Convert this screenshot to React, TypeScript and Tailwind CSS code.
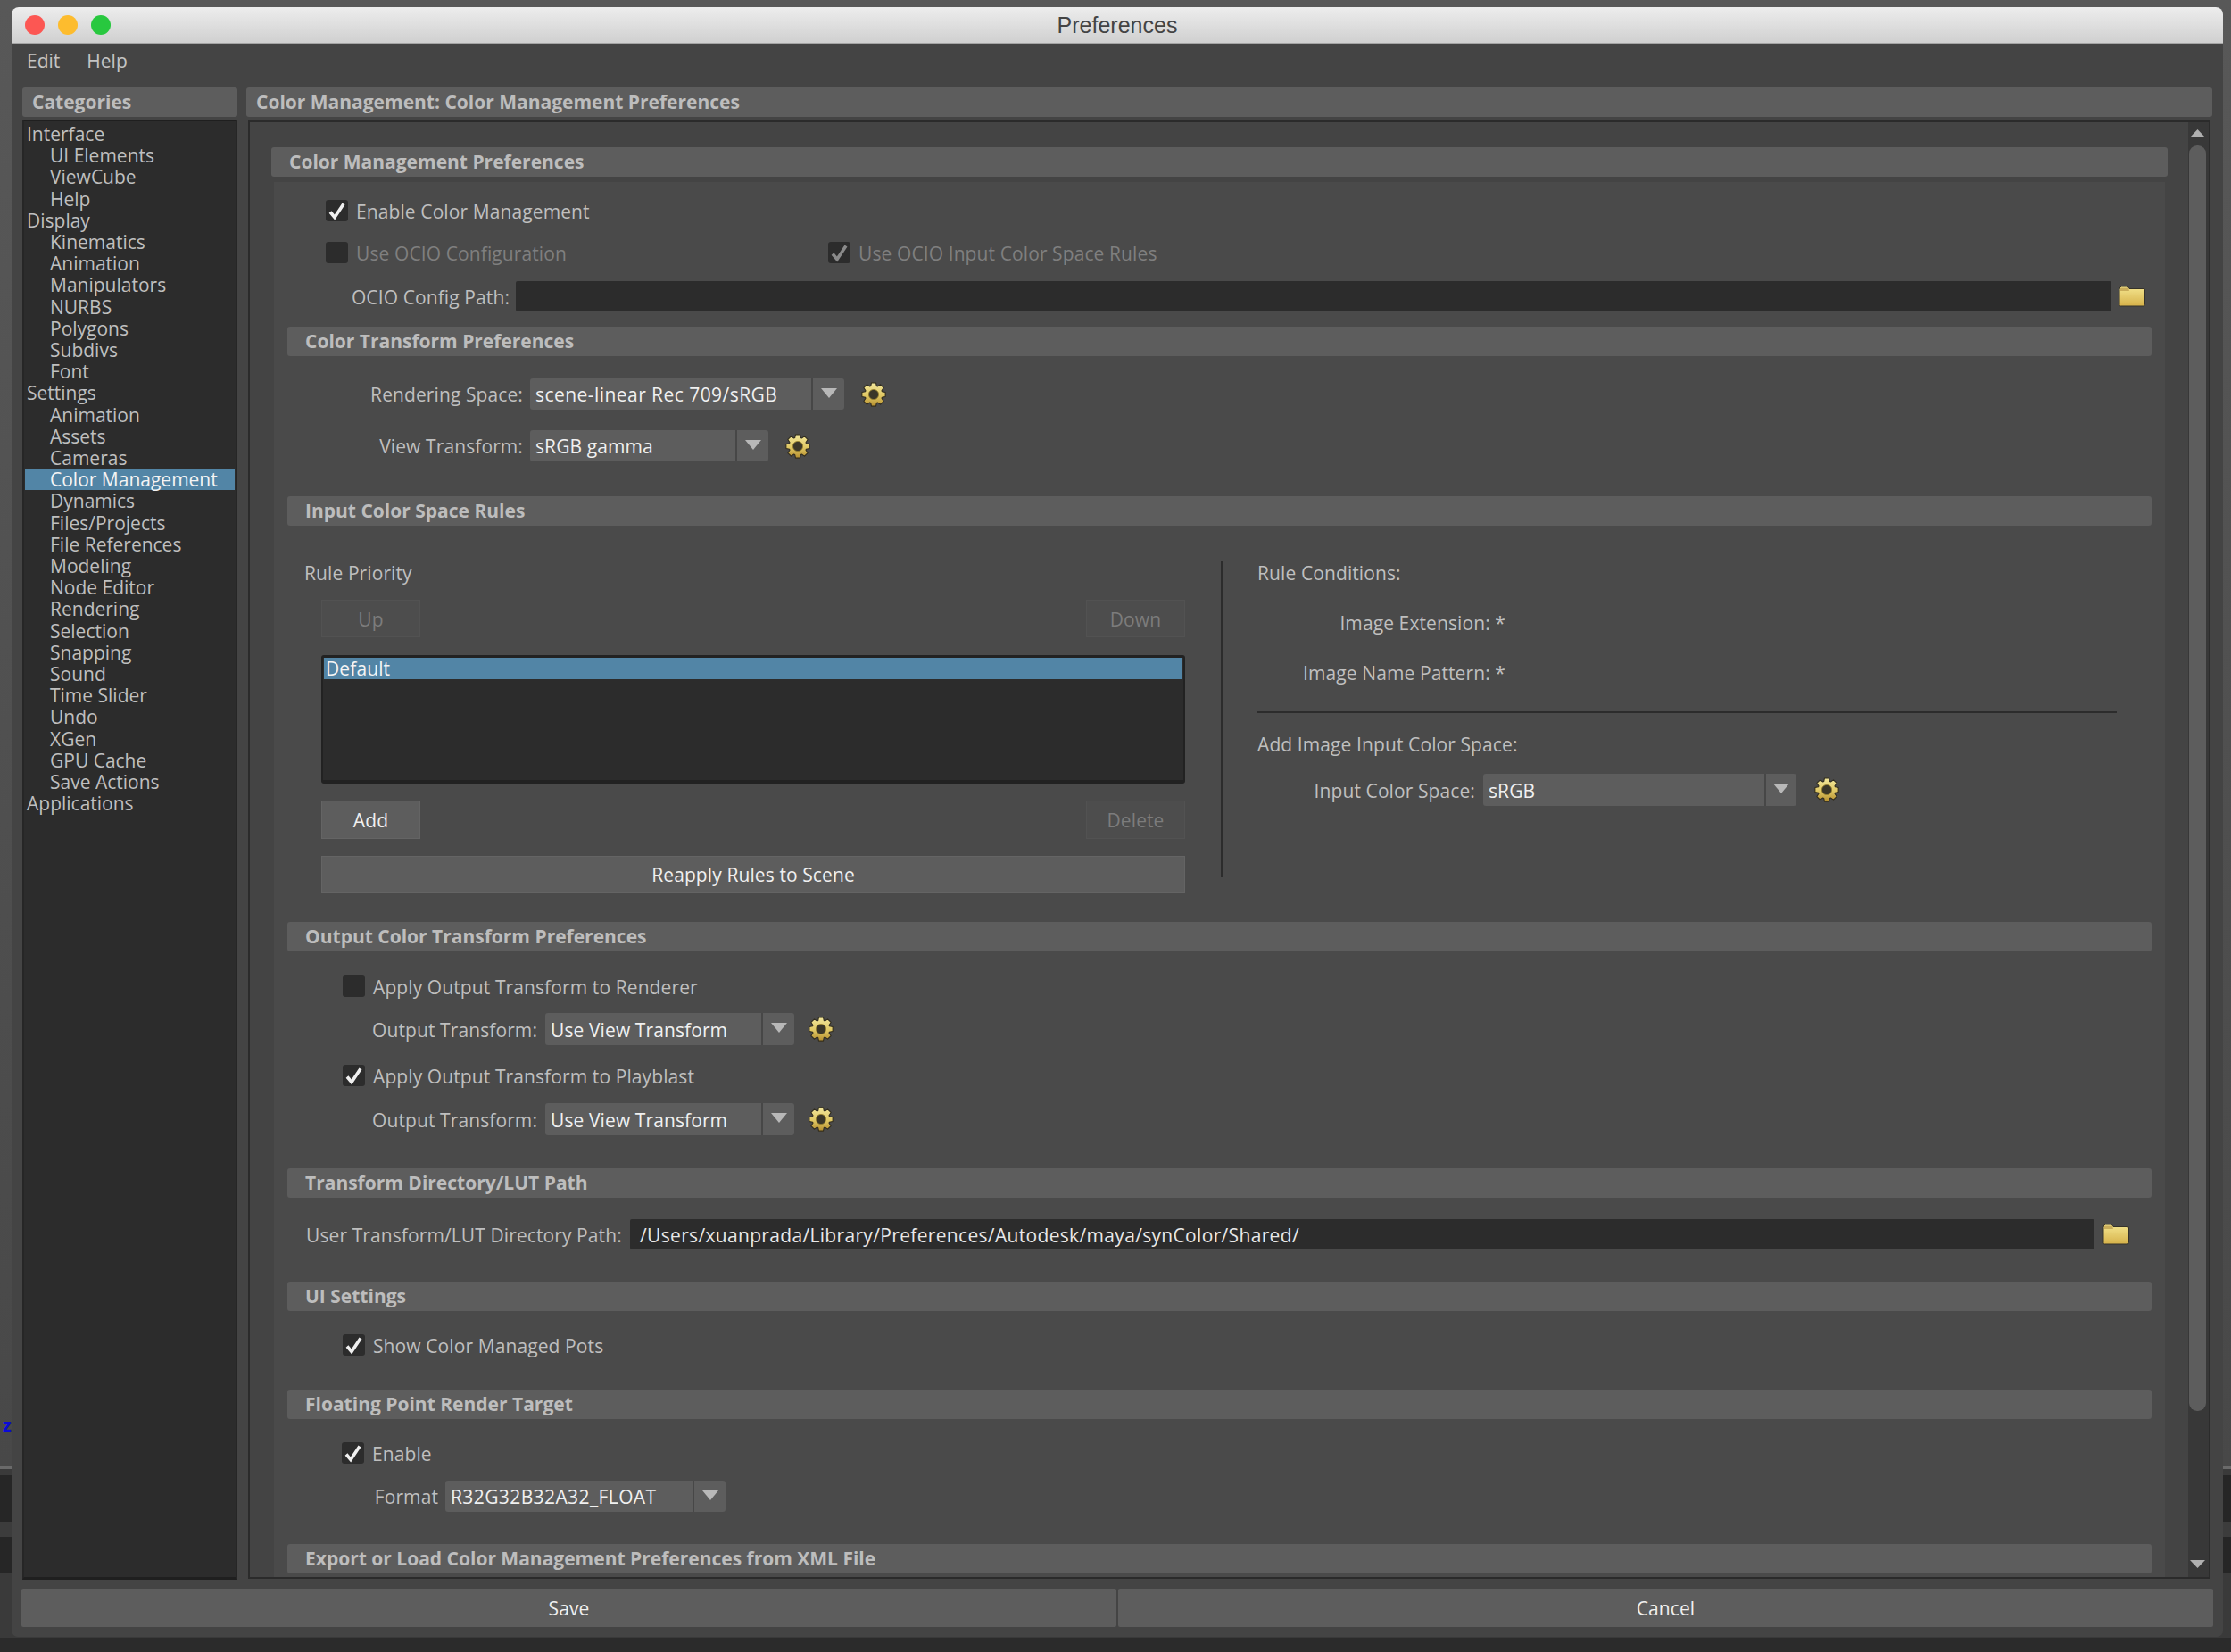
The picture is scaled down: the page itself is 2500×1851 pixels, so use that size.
const categories: [string, boolean][] = [
  ["Interface", false],
  ["UI Elements", true],
  ["ViewCube", true],
  ["Help", true],
  ["Display", false],
  ["Kinematics", true],
  ["Animation", true],
  ["Manipulators", true],
  ["NURBS", true],
  ["Polygons", true],
  ["Subdivs", true],
  ["Font", true],
  ["Settings", false],
  ["Animation", true],
  ["Assets", true],
  ["Cameras", true],
  ["Color Management", true],
  ["Dynamics", true],
  ["Files/Projects", true],
  ["File References", true],
  ["Modeling", true],
  ["Node Editor", true],
  ["Rendering", true],
  ["Selection", true],
  ["Snapping", true],
  ["Sound", true],
  ["Time Slider", true],
  ["Undo", true],
  ["XGen", true],
  ["GPU Cache", true],
  ["Save Actions", true],
  ["Applications", false],
];

// 8 tooth gear outline, centred on 14,14
const gearPath = () => {
  const pts: string[] = [];
  for (let i = 0; i < 8; i++) {
    const a = (i * Math.PI) / 4 - Math.PI / 2;
    const steps: [number, number][] = [
      [10, -0.34],
      [13.4, -0.19],
      [13.4, 0.19],
      [10, 0.34],
    ];
    for (const [r, d] of steps) {
      pts.push(`${(14 + r * Math.cos(a + d)).toFixed(2)},${(14 + r * Math.sin(a + d)).toFixed(2)}`);
    }
  }
  return "M" + pts.join("L") + "Z";
};

function Gear({ className }: { className: string }) {
  return (
    <svg viewBox="0 0 28 28" className={`h-[28px] w-[28px] shrink-0 ${className}`}>
      <defs>
        <linearGradient id="gear-fill" x1="0" y1="0" x2="0" y2="1">
          <stop offset="0" stopColor="#f2e79c" />
          <stop offset="0.55" stopColor="#e0c864" />
          <stop offset="1" stopColor="#b58e2e" />
        </linearGradient>
      </defs>
      <path d={gearPath()} fill="url(#gear-fill)" stroke="#2f2b1e" strokeWidth="1.1" strokeLinejoin="round" />
      <circle cx="14" cy="14" r="5.6" fill="#3a3628" stroke="#96802f" strokeWidth="0.8" />
    </svg>
  );
}

function Folder({ className }: { className: string }) {
  return (
    <svg viewBox="0 0 30 24" className={`h-[24px] w-[30px] shrink-0 ${className}`}>
      <defs>
        <linearGradient id="folder-fill" x1="0" y1="0" x2="0" y2="1">
          <stop offset="0" stopColor="#f4e58f" />
          <stop offset="1" stopColor="#d6b24a" />
        </linearGradient>
      </defs>
      <path
        d="M1 4.5 Q1 1 3.5 1 L9 1 Q11 1 12 3.5 L28 3.5 Q29.5 3.5 29.5 5 L29.5 21.5 Q29.5 23 28 23 L2.5 23 Q1 23 1 21.5 Z"
        fill="url(#folder-fill)"
        stroke="#35322a"
        strokeWidth="1"
      />
      <path d="M2 2.5 L11 2.5 L12 6 L2 6 Z" fill="#c9ad5a" />
    </svg>
  );
}

function Checkbox({ checked, dim }: { checked?: boolean; dim?: boolean }) {
  return (
    <div className="flex h-[24px] w-[25px] shrink-0 items-center justify-center rounded-[3px] bg-[#2c2c2c]">
      {checked && (
        <svg viewBox="0 0 25 24" className="h-[24px] w-[25px]">
          <path
            d="M5 13.5 L10 19.5 L20 4.5"
            fill="none"
            stroke={dim ? "#8a8a8a" : "#f0f0f0"}
            strokeWidth="3.6"
          />
        </svg>
      )}
    </div>
  );
}

function Bar({ label, className }: { label: string; className?: string }) {
  return (
    <div
      className={`flex h-[33px] shrink-0 items-center rounded-[3px] bg-[#5d5d5d] pl-[20px] text-[21px] font-bold tracking-normal text-[#bdbdbd] ${className ?? ""}`}
    >
      {label}
    </div>
  );
}

function Combo({
  value,
  width,
  arrow = 37,
  height = "h-[35px]",
  textClass = "",
}: {
  value: string;
  width: string;
  arrow?: number;
  height?: string;
  textClass?: string;
}) {
  return (
    <div className={`flex shrink-0 rounded-[3px] bg-[#5d5d5d] ${width} ${height}`}>
      <div className={`flex flex-1 items-center pl-[6px] pt-[3px] text-[#f0f0f0] ${textClass}`}>{value}</div>
      <div
        className="flex shrink-0 items-center justify-center border-l-2 border-[#474747]"
        style={{ width: arrow }}
      >
        <svg viewBox="0 0 18 11" className="-mt-[3px] h-[11px] w-[18px]">
          <polygon points="0,0 18,0 9,11" fill="#b8b8b8" />
        </svg>
      </div>
    </div>
  );
}

function DisabledButton({ label, className }: { label: string; className?: string }) {
  return (
    <div
      className={`flex items-center justify-center border border-[#525252] bg-[#4d4d4d] pt-[3px] text-[#7c7c7c] ${className ?? ""}`}
    >
      {label}
    </div>
  );
}

function CheckRow({
  label,
  checked,
  className,
}: {
  label: string;
  checked?: boolean;
  className: string;
}) {
  return (
    <div className={`flex h-[24px] items-center gap-[9px] ${className}`}>
      <Checkbox checked={checked} />
      <span className="pt-[3px]">{label}</span>
    </div>
  );
}

function OutputRow({ className }: { className: string }) {
  return (
    <div className={`flex h-[36px] items-center ${className}`}>
      <div className="w-[295px] pt-[3px] text-right">Output Transform:</div>
      <div className="w-[9px]" />
      <Combo value="Use View Transform" width="w-[279px]" height="h-[36px]" />
      <Gear className="ml-[16px]" />
    </div>
  );
}

function Backdrop() {
  return (
    <div className="flex h-full flex-col">
      <div className="h-[1643px] bg-gradient-to-b from-[#585858] to-[#484848]" />
      <div className="h-[3px] bg-[#6a6a6a]" />
      <div className="h-[7px] bg-[#3a3a3a]" />
      <div className="h-[52px] bg-[#262626]" />
      <div className="h-[17px] bg-[#3c3c3c]" />
      <div className="h-[40px] bg-[#262626]" />
      <div className="h-[73px] bg-[#3a3a3a]" />
      <div className="flex-1 bg-[#2b2b2b]" />
    </div>
  );
}

export default function App() {
  return (
    <div className="relative h-[1851px] w-[2500px] overflow-hidden font-['Open_Sans',sans-serif] text-[21px] tracking-[0.1px] text-[#bfbfbf]">
      <Backdrop />
      <span className="absolute left-[3px] top-[1582px] text-[20px] font-bold text-[#0a0ad8]">z</span>

      <div className="absolute left-[13px] top-[8px] flex h-[1826px] w-[2478px] flex-col rounded-t-[8px] rounded-b-[7px] bg-[#444444]">
        {/* title bar */}
        <div className="grid h-[41px] shrink-0 grid-cols-[1fr_auto_1fr] items-center rounded-t-[8px] border-b border-[#a4a4a4] bg-gradient-to-b from-[#ededed] to-[#d0d0d0]">
          <div className="flex gap-[15px] pl-[15px]">
            <div className="h-[22px] w-[22px] rounded-full bg-[#fc5753]" />
            <div className="h-[22px] w-[22px] rounded-full bg-[#fdbc2e]" />
            <div className="h-[22px] w-[22px] rounded-full bg-[#28c83f]" />
          </div>
          <div className="pt-[2px] font-['Liberation_Sans',sans-serif] text-[25px] tracking-normal text-[#444444]">
            Preferences
          </div>
          <div />
        </div>

        {/* menu bar */}
        <div className="flex h-[49px] shrink-0 items-start gap-[30px] pl-[17px] pt-[4px] text-[21px] tracking-normal text-[#c4c4c4]">
          <span>Edit</span>
          <span>Help</span>
        </div>

        <div className="flex min-h-0 flex-1 gap-[10px] px-[12px]">
          {/* categories */}
          <div className="flex w-[241px] shrink-0 flex-col">
            <div className="flex h-[33px] shrink-0 items-center rounded-[3px] bg-[#5d5d5d] pl-[11px] text-[21px] font-bold tracking-normal text-[#bdbdbd]">
              Categories
            </div>
            <div className="mt-[3px] h-[1636px] border-x-2 border-t-2 border-b-[3px] border-x-[#262626] border-t-[#1f1f1f] border-b-[#1f1f1f] bg-[#2c2c2c] pt-[2px] leading-[24.2px] tracking-normal">
              {categories.map(([name, sub], i) =>
                name === "Color Management" ? (
                  <div key={i} className="mx-px bg-[#5285a6] pl-[28px] text-[#f4f4f4]">
                    {name}
                  </div>
                ) : (
                  <div key={i} className={sub ? "pl-[29px]" : "pl-[3px]"}>
                    {name}
                  </div>
                ),
              )}
            </div>
          </div>

          {/* page */}
          <div className="flex min-w-0 flex-1 flex-col">
            <div className="flex h-[33px] shrink-0 items-center rounded-[3px] bg-[#5d5d5d] pl-[11px] text-[21px] font-bold tracking-normal text-[#bdbdbd]">
              Color Management: Color Management Preferences
            </div>
            <div className="mx-[2px] mt-[4px] flex h-[1634px] border-2 border-[#2b2b2b]">
              <div className="flex min-w-0 flex-1 flex-col overflow-hidden pl-[24px] pr-[23px] pt-[28px]">
                <Bar label="Color Management Preferences" />
                <div className="mx-[3px] mt-[6px] flex-1 bg-[#4a4a4a]">
                  <CheckRow label="Enable Color Management" checked className="ml-[58px] mt-[20px]" />
                  <div className="ml-[58px] mt-[23px] flex h-[24px] items-center text-[#7f7f7f]">
                    <div className="flex w-[563px] items-center gap-[9px]">
                      <Checkbox />
                      <span className="pt-[3px]">Use OCIO Configuration</span>
                    </div>
                    <div className="flex items-center gap-[9px]">
                      <Checkbox checked dim />
                      <span className="pt-[3px]">Use OCIO Input Color Space Rules</span>
                    </div>
                  </div>
                  <div className="mt-[20px] flex h-[34px] items-center">
                    <div className="w-[264px] pt-[3px] text-right">OCIO Config Path:</div>
                    <div className="ml-[7px] h-[34px] w-[1788px] rounded-[2px] bg-[#2c2c2c]" />
                    <Folder className="ml-[8px]" />
                  </div>

                  <Bar label="Color Transform Preferences" className="mx-[15px] mt-[17px]" />
                  <div className="mt-[25px] flex h-[35px] items-center">
                    <div className="w-[279px] pt-[3px] text-right">Rendering Space:</div>
                    <div className="w-[8px]" />
                    <Combo value="scene-linear Rec 709/sRGB" width="w-[352px]" textClass="tracking-[0.45px]" />
                    <Gear className="ml-[19px]" />
                  </div>
                  <div className="mt-[23px] flex h-[35px] items-center">
                    <div className="w-[279px] pt-[3px] text-right">View Transform:</div>
                    <div className="w-[8px]" />
                    <Combo value="sRGB gamma" width="w-[267px]" />
                    <Gear className="ml-[19px]" />
                  </div>

                  <Bar label="Input Color Space Rules" className="mx-[15px] mt-[39px]" />
                  <div className="mt-[40px] flex h-[372px]">
                    <div className="ml-[34px] flex w-[987px] shrink-0 flex-col">
                      <div className="h-[26px] leading-[26px]">Rule Priority</div>
                      <div className="mt-[17px] flex h-[42px] justify-between pl-[19px]">
                        <DisabledButton label="Up" className="w-[111px]" />
                        <DisabledButton label="Down" className="w-[111px]" />
                      </div>
                      <div className="ml-[19px] mt-[20px] h-[144px] rounded-[3px] border-x-2 border-t-[3px] border-b-[4px] border-[#222222] bg-[#2c2c2c] px-px">
                        <div className="h-[24px] bg-[#5285a6] pl-[2px] leading-[24px] text-[#f4f4f4]">Default</div>
                      </div>
                      <div className="mt-[19px] flex h-[43px] justify-between pl-[19px]">
                        <div className="flex w-[111px] items-center justify-center border border-[#646464] bg-[#5d5d5d] pt-[2px] text-[#efefef]">
                          Add
                        </div>
                        <DisabledButton label="Delete" className="w-[111px]" />
                      </div>
                      <div className="ml-[19px] mt-[19px] flex h-[42px] items-center justify-center border border-[#646464] bg-[#5d5d5d] pt-[2px] text-[#efefef]">
                        Reapply Rules to Scene
                      </div>
                    </div>

                    <div className="ml-[40px] h-[354px] w-[2px] shrink-0 bg-[#2c2c2c]" />

                    <div className="ml-[39px] flex w-[963px] shrink-0 flex-col">
                      <div className="h-[26px] leading-[26px]">Rule Conditions:</div>
                      <div className="mt-[30px] h-[26px] w-[278px] text-right leading-[26px]">Image Extension: *</div>
                      <div className="mt-[30px] h-[26px] w-[278px] text-right leading-[26px]">Image Name Pattern: *</div>
                      <div className="mt-[30px] h-[2px] bg-[#2c2c2c]" />
                      <div className="mt-[22px] h-[26px] leading-[26px]">Add Image Input Color Space:</div>
                      <div className="mt-[20px] flex h-[36px] items-center">
                        <div className="w-[244px] pt-[3px] text-right">Input Color Space:</div>
                        <div className="w-[9px]" />
                        <Combo value="sRGB" width="w-[351px]" arrow={36} height="h-[36px]" />
                        <Gear className="ml-[20px]" />
                      </div>
                    </div>
                  </div>

                  <Bar label="Output Color Transform Preferences" className="mx-[15px] mt-[32px]" />
                  <CheckRow label="Apply Output Transform to Renderer" className="ml-[77px] mt-[27px]" />
                  <OutputRow className="mt-[18px]" />
                  <CheckRow label="Apply Output Transform to Playblast" checked className="ml-[77px] mt-[22px]" />
                  <OutputRow className="mt-[19px]" />

                  <Bar label="Transform Directory/LUT Path" className="mx-[15px] mt-[37px]" />
                  <div className="mt-[24px] flex h-[34px] items-center pl-[36px]">
                    <div className="w-[355px] pt-[3px]">User Transform/LUT Directory Path:</div>
                    <div className="ml-[8px] flex h-[34px] w-[1641px] items-center rounded-[2px] bg-[#2c2c2c] pl-[11px] pt-[3px] tracking-[0.33px] text-[#e8e8e8]">
                      /Users/xuanprada/Library/Preferences/Autodesk/maya/synColor/Shared/
                    </div>
                    <Folder className="ml-[9px]" />
                  </div>

                  <Bar label="UI Settings" className="mx-[15px] mt-[36px]" />
                  <CheckRow label="Show Color Managed Pots" checked className="ml-[77px] mt-[26px]" />

                  <Bar label="Floating Point Render Target" className="mx-[15px] mt-[38px]" />
                  <CheckRow label="Enable" checked className="ml-[76px] mt-[26px]" />
                  <div className="mt-[19px] flex h-[35px] items-center">
                    <div className="w-[184px] pt-[3px] text-right">Format</div>
                    <div className="w-[8px]" />
                    <Combo value="R32G32B32A32_FLOAT" width="w-[314px]" textClass="tracking-[0.4px]" />
                  </div>

                  <Bar label="Export or Load Color Management Preferences from XML File" className="mx-[15px] mt-[36px]" />
                </div>
              </div>

              {/* scrollbar */}
              <div className="flex w-[23px] shrink-0 flex-col items-center bg-[#383838] pb-[10px] pr-[2px] pt-[8px]">
                <svg viewBox="0 0 17 9" className="h-[9px] w-[17px] shrink-0">
                  <polygon points="8.5,0 17,9 0,9" fill="#b0b0b0" />
                </svg>
                <div className="mt-[9px] h-[1418px] w-[19px] shrink-0 rounded-[9px] bg-[#5d5d5d]" />
                <svg viewBox="0 0 17 9" className="mt-auto h-[9px] w-[17px] shrink-0">
                  <polygon points="0,0 17,0 8.5,9" fill="#b0b0b0" />
                </svg>
              </div>
            </div>
          </div>
        </div>

        {/* footer */}
        <div className="mb-[11px] mt-[10px] flex h-[43px] shrink-0 gap-[2px] px-[11px] text-[#efefef]">
          <div className="flex flex-1 items-center justify-center rounded-[2px] bg-[#5d5d5d] pt-[2px]">Save</div>
          <div className="flex flex-1 items-center justify-center rounded-[2px] bg-[#5d5d5d] pt-[2px]">Cancel</div>
        </div>
      </div>
    </div>
  );
}
